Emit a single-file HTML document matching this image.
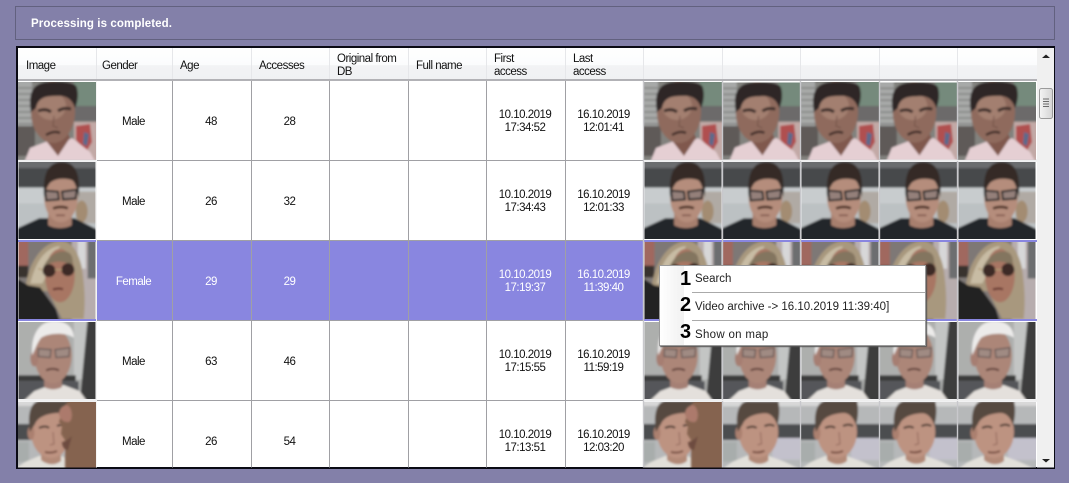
<!DOCTYPE html>
<html><head><meta charset="utf-8"><style>
html,body{margin:0;padding:0}
body{width:1069px;height:483px;overflow:hidden;background:#8380a9;position:relative;font-family:"Liberation Sans",sans-serif;font-size:11.5px;letter-spacing:-.5px;color:#111}
.a{position:absolute}
.panel{left:15px;top:6px;width:1038px;height:32px;border:1px solid #62617f;background:#8380a9}
.msg{left:31px;top:17px;color:#fff;font-weight:bold;font-size:11.5px;line-height:15px;letter-spacing:.1px}
.tb{left:16px;top:46px;width:1035px;height:419px;border:2px solid #0a0a14;background:#fff;overflow:hidden}
.h{top:47px;height:33px;line-height:14px;white-space:nowrap;margin-top:1px}
.c{text-align:center;line-height:13px;white-space:nowrap;margin-top:1px;margin-left:-1px}
.m{left:659px;top:265px;width:267px;height:81px;background:#fff;box-shadow:1px 1px 1px #555;border:1px solid #9a9a9a;box-sizing:border-box}
.n{font-weight:bold;font-size:20px;color:#000;line-height:22px;letter-spacing:0}
.mt{font-size:11.5px;color:#222;white-space:nowrap;line-height:14px;letter-spacing:0}
</style></head><body>
<div class="a panel"></div><div class="a msg">Processing is completed.</div>
<div class="a tb"></div>
<svg class="a" style="left:0;top:0" width="1069" height="483" viewBox="0 0 1069 483">
<defs>
<filter id="b" x="-5%" y="-5%" width="110%" height="110%"><feGaussianBlur stdDeviation="1"/></filter>
<linearGradient id="hd" x1="0" y1="0" x2="0" y2="1"><stop offset="0" stop-color="#fff"/><stop offset=".55" stop-color="#fbfcfd"/><stop offset=".56" stop-color="#f2f3f5"/><stop offset="1" stop-color="#f0f1f3"/></linearGradient>
<linearGradient id="sb" x1="0" y1="0" x2="1" y2="0"><stop offset="0" stop-color="#f4f4f4"/><stop offset="1" stop-color="#d4d4d4"/></linearGradient>
<clipPath id="cp"><rect width="78" height="78"/></clipPath>
<symbol id="A" viewBox="0 0 78 78"><g clip-path="url(#cp)"><g filter="url(#b)">
<rect x="-3" y="-3" width="84" height="84" fill="#82827e"/><rect x="-3" y="-3" width="17" height="50" fill="#a7a9a8"/><path d="M0 6h14M0 12h14M0 18h14M0 24h14M0 30h14M0 36h14M0 42h14" stroke="#6c6d6b"/>
<rect x="56" y="-3" width="25" height="27" fill="#748a7c"/><rect x="54" y="24" width="27" height="15" fill="#6c6b6a"/>
<rect x="56" y="40" width="25" height="40" fill="#c2a9a6"/><path d="M58 44l14-2 2 18-6 10-10-12z" fill="#b0504f"/><path d="M66 50l5 2-2 12-4-2z" fill="#5c6a8c"/>
<rect x="-3" y="44" width="20" height="30" fill="#5e5a58"/>
<path d="M6 81l6-15 18-7 10 5 14-8 18 14 6 11z" fill="#e5cfd3"/><path d="M26 56l14 18 12-18-4-10-20 2z" fill="#80584e"/>
<ellipse cx="35" cy="30" rx="22" ry="31" fill="#8f6b5d"/><ellipse cx="33" cy="24" rx="15" ry="14" fill="#a37f70"/>
<path d="M13 30C10 12 14 1 30 0c14-1 28 0 29 6 2 8 0 16-2 20-3-10-10-13-20-12-10 0-17 2-19 12z" fill="#2e2827"/>
<path d="M20 29c5-2 9-2 13 1M40 29c4-3 9-3 13-2" stroke="#3e2d2a" stroke-width="3" fill="none"/>
<path d="M36 34l-1 10 5 2" stroke="#74524a" fill="none"/><path d="M28 53c5-3 10-4 14-2" stroke="#3e2a28" stroke-width="2.4" fill="none"/>
</g></g></symbol>
<symbol id="B" viewBox="0 0 78 78"><g clip-path="url(#cp)"><g filter="url(#b)">
<rect x="-3" y="-3" width="84" height="84" fill="#bcc1c3"/><rect x="-3" y="-3" width="84" height="9" fill="#6a6c6e"/><rect x="-3" y="6" width="84" height="20" fill="#47494b"/><rect x="-3" y="26" width="84" height="16" fill="#c8ccce"/>
<rect x="58" y="30" width="23" height="32" fill="#b0aaa4"/><ellipse cx="64" cy="50" rx="6" ry="11" fill="#a38c72"/>
<path d="M-3 81V68l24-11h36l24 12v12z" fill="#24262b"/>
<path d="M30 52h24v12c-6 4-18 4-24 0z" fill="#a77f6e"/>
<ellipse cx="43" cy="36" rx="17" ry="25" fill="#b58d7c"/>
<path d="M26 36C24 12 30 0 44 0c14 0 19 12 17 36-2-12-4-17-8-18-8-2-16-1-21 3-3 4-5 8-6 15z" fill="#352c28"/>
<path d="M27 29l13 1 1 8-13 1zM44 30l15-2-1 9-13 1z" fill="#94807a" stroke="#2a2a2c" stroke-width="2"/>
<path d="M35 47c5-2 11-2 15 0" stroke="#4e3228" stroke-width="2.6" fill="none"/><path d="M38 54h9" stroke="#7a4f47" stroke-width="1.5"/>
</g></g></symbol>
<symbol id="C" viewBox="0 0 78 78"><g clip-path="url(#cp)"><g filter="url(#b)">
<rect x="-3" y="-3" width="84" height="84" fill="#7e7876"/><rect x="54" y="-3" width="27" height="84" fill="#b7adae"/><rect x="60" y="-3" width="8" height="30" fill="#d7d7d8"/><rect x="70" y="-3" width="11" height="40" fill="#6d6e70"/>
<rect x="-3" y="-3" width="13" height="28" fill="#a0685e"/><rect x="-3" y="24" width="13" height="12" fill="#39302e"/>
<path d="M7 48C10 18 26 0 42 -1c12 0 18 10 22 26 3 20 4 34 2 53H44L30 50z" fill="#a8987e"/>
<path d="M12 42C18 16 30 5 42 4l-8 20-10 18z" fill="#c8bca4"/>
<ellipse cx="42" cy="34" rx="15" ry="27" fill="#a87664"/>
<path d="M25 26c6-14 16-18 24-16 6 2 6 8 6 14-10-6-20-6-30 2z" fill="#83745f"/>
<circle cx="31" cy="29" r="6" fill="#3d2a26" stroke="#2a1c1a"/><circle cx="50" cy="28" r="6" fill="#3d2a26" stroke="#2a1c1a"/><path d="M24 28l-4-1M37 28h7" stroke="#b09a72" stroke-width="1.4"/>
<path d="M35 48c4-1 8-1 10 0" stroke="#5c2c26" stroke-width="2" fill="none"/>
<path d="M-3 36l13 8 12 2 16 22 4 13H-3z" fill="#232224"/>
</g></g></symbol>
<symbol id="D" viewBox="0 0 78 78"><g clip-path="url(#cp)"><g filter="url(#b)">
<rect x="-3" y="-3" width="84" height="84" fill="#adafad"/><rect x="56" y="-3" width="25" height="61" fill="#c3c5c4"/><path d="M70 -3h11v84H62z" fill="#3c3d3c"/>
<rect x="-3" y="54" width="61" height="6" fill="#3a3a3a"/><rect x="-3" y="60" width="64" height="21" fill="#55565a"/>
<path d="M4 81l12-11 16-6 14 0 16 6 8 11z" fill="#e4e0dc"/>
<path d="M26 52h18v14c-6 3-12 3-18 0z" fill="#a58074"/>
<ellipse cx="35" cy="34" rx="19" ry="28" fill="#ac8678"/><ellipse cx="16" cy="37" rx="4" ry="8" fill="#a67e72"/>
<path d="M14 34C12 12 22 -1 36 -1c13 0 20 7 20 17-8-6-26-5-33 0-4 5-6 11-9 18z" fill="#ecebea"/>
<path d="M20 27l13 1-1 8-12-1zM37 28l15-2-1 9-13 1z" fill="#a08b83" stroke="#6a5a58" stroke-width="1.4"/>
<path d="M28 49c4-2 9-2 13 0" stroke="#5e3e38" stroke-width="2" fill="none"/>
</g></g></symbol>
<symbol id="E" viewBox="0 0 78 66"><g filter="url(#b)">
<rect x="-3" y="-3" width="84" height="72" fill="#b6b8b9"/><rect x="-3" y="22" width="84" height="16" fill="#4b4d50"/><rect x="-3" y="-3" width="84" height="7" fill="#d8d8d8"/>
<rect x="50" y="36" width="31" height="22" fill="#c3c1cc"/><rect x="-3" y="40" width="17" height="20" fill="#a8adac"/>
<path d="M-3 69l13-9 14-6h22l16 6 19 9z" fill="#e2e0da"/>
<path d="M26 44h20v15c-6 5-14 4-20-1z" fill="#b28a78"/>
<ellipse cx="36" cy="30" rx="20" ry="26" fill="#bd9381"/><ellipse cx="16" cy="31" rx="3.5" ry="7" fill="#ab8070"/>
<path d="M15 30C12 12 16 0 24 -1h32c2 8 1 18-1 24-3-9-8-12-12-12-8 0-20 3-23 11-2 3-4 6-5 8z" fill="#564a40"/>
<path d="M24 26c4-2 8-2 10 0M42 24c4-2 7-2 10 0" stroke="#4c3a32" stroke-width="2" fill="none"/>
<path d="M38 30l1 12-4 1" stroke="#90685a" fill="none"/><path d="M30 50c4 1 8 1 12-1" stroke="#6e4438" stroke-width="1.8" fill="none"/>
</g></symbol>
<symbol id="E1" viewBox="0 0 78 66"><use href="#E" width="78" height="66" x="-3"/><g filter="url(#b)"><path d="M47 69V38l-4-6 1-8-3-4 5-16 6-7h28v72z" fill="#85634f"/><path d="M48 3c6 0 8 14 3 17-6 1-10-4-10-9 0-4 3-7 7-8z" fill="#ac7a6c"/><path d="M54 34c-4 4-8 6-10 6 0 4 2 8 6 8z" fill="#6d4c40"/></g></symbol>
</defs>
<!-- header -->
<rect x="18" y="48" width="1019" height="31" fill="url(#hd)"/>
<rect x="18" y="79" width="1019" height="2" fill="#b2b2b6"/>
<g stroke="#e6e7ea" stroke-width="1"><path d="M96.5 48v31M172.5 48v31M251.5 48v31M329.5 48v31M408.5 48v31M486.5 48v31M565.5 48v31M643.5 48v31M722.5 48v31M800.5 48v31M879.5 48v31M957.5 48v31"/></g>
<!-- selection -->
<rect x="97" y="241" width="546" height="79" fill="#8986e0"/>
<rect x="18" y="240" width="1019" height="2" fill="#8986e0"/><rect x="18" y="319" width="1019" height="2" fill="#8986e0"/>
<!-- images -->
<g>
<use href="#A" x="18" y="82" width="78" height="78"/><use href="#A" x="644" y="82" width="78" height="78"/><use href="#A" x="723" y="82" width="77" height="78"/><use href="#A" x="801" y="82" width="78" height="78"/><use href="#A" x="880" y="82" width="77" height="78"/><use href="#A" x="958" y="82" width="78" height="78"/>
<use href="#B" x="18" y="162" width="78" height="77"/><use href="#B" x="644" y="162" width="78" height="77"/><use href="#B" x="723" y="162" width="77" height="77"/><use href="#B" x="801" y="162" width="78" height="77"/><use href="#B" x="880" y="162" width="77" height="77"/><use href="#B" x="958" y="162" width="78" height="77"/>
<use href="#C" x="18" y="242" width="78" height="77"/><use href="#C" x="644" y="242" width="78" height="77"/><use href="#C" x="723" y="242" width="77" height="77"/><use href="#C" x="801" y="242" width="78" height="77"/><use href="#C" x="880" y="242" width="77" height="77"/><use href="#C" x="958" y="242" width="78" height="77"/>
<use href="#D" x="18" y="322" width="78" height="77"/><use href="#D" x="644" y="322" width="78" height="77"/><use href="#D" x="723" y="322" width="77" height="77"/><use href="#D" x="801" y="322" width="78" height="77"/><use href="#D" x="880" y="322" width="77" height="77"/><use href="#D" x="958" y="322" width="78" height="77"/>
<use href="#E1" x="18" y="402" width="78" height="66"/><use href="#E1" x="644" y="402" width="78" height="66"/><use href="#E" x="723" y="402" width="77" height="66"/><use href="#E" x="801" y="402" width="78" height="66"/><use href="#E" x="880" y="402" width="77" height="66"/><use href="#E" x="958" y="402" width="78" height="66"/>
</g>
<!-- grid -->
<g stroke="#a0a0a4" stroke-width="1"><path d="M172.5 81v387M251.5 81v387M329.5 81v387M408.5 81v387M486.5 81v387M565.5 81v387"/><path d="M96 160.5h548M96 400.5h548M96 320.5h548M96 240.5h548"/></g>
<g stroke="#f4f4f4" stroke-width="1"><path d="M96.5 81v387"/></g>
<g stroke="#c8c8cc" stroke-width="1.4"><path d="M643.5 81v387M722.5 81v387M800.5 81v387M879.5 81v387M957.5 81v387"/><path d="M18 160.5h78M644 160.5h393M18 400.5h78M644 400.5h393"/></g>
<path d="M18 160.5h78M644 160.5h393M18 400.5h78M644 400.5h393" stroke="#eee" stroke-width="1"/>
<!-- scrollbar -->
<rect x="1037" y="48" width="17" height="420" fill="#f0f0f0"/>
<path d="M1046 54.5l4 3.5h-8zM1046 462.5l4-3.5h-8z" fill="#222"/>
<rect x="1039.5" y="88.5" width="13" height="30" rx="2" fill="url(#sb)" stroke="#9a9a9a"/>
<path d="M1043 99h6M1043 101.5h6M1043 104h6M1043 106.5h6" stroke="#6a6a6a"/>
<rect x="16" y="467.5" width="1039" height="1.5" fill="#0a0a14"/>
</svg>
<!-- header text -->
<div class="a h" style="left:26px;top:58px;height:14px">Image</div>
<div class="a h" style="left:102px;top:58px;height:14px">Gender</div>
<div class="a h" style="left:180px;top:58px;height:14px">Age</div>
<div class="a h" style="left:259px;top:58px;height:14px">Accesses</div>
<div class="a h" style="left:337px;top:52px;line-height:13px">Original from<br>DB</div>
<div class="a h" style="left:416px;top:58px;height:14px">Full name</div>
<div class="a h" style="left:494px;top:52px;line-height:13px">First<br>access</div>
<div class="a h" style="left:573px;top:52px;line-height:13px">Last<br>access</div>
<!-- rows -->
<div class="a c" style="left:97px;width:75px;top:115px">Male</div><div class="a c" style="left:173px;width:78px;top:115px">48</div><div class="a c" style="left:252px;width:77px;top:115px">28</div><div class="a c" style="left:487px;width:78px;top:108px">10.10.2019<br>17:34:52</div><div class="a c" style="left:566px;width:77px;top:108px">16.10.2019<br>12:01:41</div>
<div class="a c" style="left:97px;width:75px;top:195px">Male</div><div class="a c" style="left:173px;width:78px;top:195px">26</div><div class="a c" style="left:252px;width:77px;top:195px">32</div><div class="a c" style="left:487px;width:78px;top:188px">10.10.2019<br>17:34:43</div><div class="a c" style="left:566px;width:77px;top:188px">16.10.2019<br>12:01:33</div>
<div class="a c" style="left:97px;width:75px;top:275px;color:#fff">Female</div><div class="a c" style="left:173px;width:78px;top:275px;color:#fff">29</div><div class="a c" style="left:252px;width:77px;top:275px;color:#fff">29</div><div class="a c" style="left:487px;width:78px;top:268px;color:#fff">10.10.2019<br>17:19:37</div><div class="a c" style="left:566px;width:77px;top:268px;color:#fff">16.10.2019<br>11:39:40</div>
<div class="a c" style="left:97px;width:75px;top:355px">Male</div><div class="a c" style="left:173px;width:78px;top:355px">63</div><div class="a c" style="left:252px;width:77px;top:355px">46</div><div class="a c" style="left:487px;width:78px;top:348px">10.10.2019<br>17:15:55</div><div class="a c" style="left:566px;width:77px;top:348px">16.10.2019<br>11:59:19</div>
<div class="a c" style="left:97px;width:75px;top:435px">Male</div><div class="a c" style="left:173px;width:78px;top:435px">26</div><div class="a c" style="left:252px;width:77px;top:435px">54</div><div class="a c" style="left:487px;width:78px;top:428px">10.10.2019<br>17:13:51</div><div class="a c" style="left:566px;width:77px;top:428px">16.10.2019<br>12:03:20</div>
<!-- context menu -->
<div class="a m"></div>
<div class="a" style="left:660px;top:266px;width:24px;height:79px;background:linear-gradient(90deg,#fff,#f1f1f1)"></div>
<div class="a" style="left:692px;top:292px;width:233px;height:1px;background:#aaa"></div>
<div class="a" style="left:692px;top:320px;width:233px;height:1px;background:#aaa"></div>
<div class="a n" style="left:680px;top:268px">1</div>
<div class="a n" style="left:680px;top:294px">2</div>
<div class="a n" style="left:680px;top:321px">3</div>
<div class="a mt" style="left:695px;top:272px">Search</div>
<div class="a mt" style="left:695px;top:300px">Video archive -&gt; 16.10.2019 11:39:40]</div>
<div class="a mt" style="left:695px;top:328px;letter-spacing:.3px">Show on map</div>
</body></html>
